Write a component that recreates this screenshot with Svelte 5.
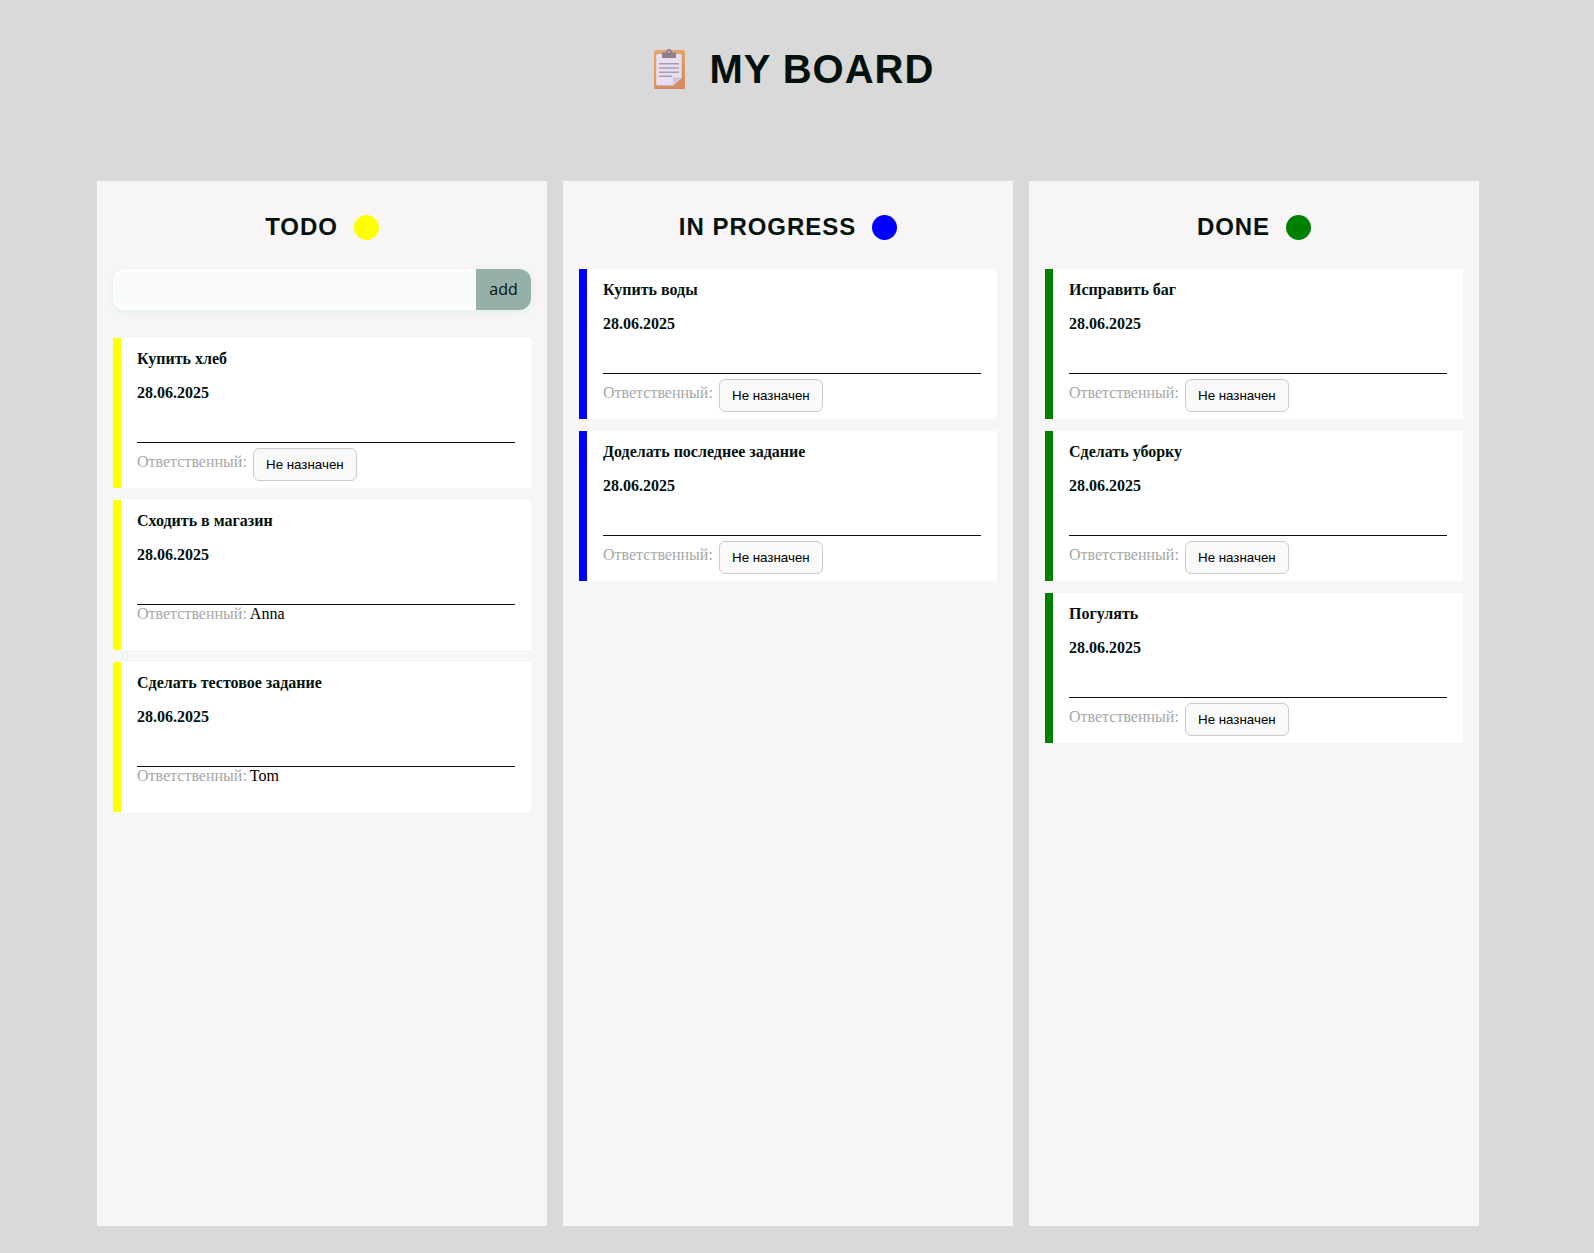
<script>
  const date = '28.06.2025';
  const columns = [
    {
      title: 'TODO',
      kind: 'todo',
      form: true,
      tasks: [
        { name: 'Купить хлеб' },
        { name: 'Сходить в магазин', person: 'Anna' },
        { name: 'Сделать тестовое задание', person: 'Tom' }
      ]
    },
    {
      title: 'IN PROGRESS',
      kind: 'progress',
      tasks: [{ name: 'Купить воды' }, { name: 'Доделать последнее задание' }]
    },
    {
      title: 'DONE',
      kind: 'done',
      tasks: [{ name: 'Исправить баг' }, { name: 'Сделать уборку' }, { name: 'Погулять' }]
    }
  ];
</script>

<div class="page">
  <header>
    <svg class="logo" viewBox="0 0 31 40.500" width="31" height="40" preserveAspectRatio="none" aria-hidden="true">
      <defs>
        <linearGradient id="wood" x1="0" y1="0" x2="0.4" y2="1">
          <stop offset="0" stop-color="#e6a878" />
          <stop offset="0.6" stop-color="#e09a60" />
          <stop offset="1" stop-color="#d78d5c" />
        </linearGradient>
        <linearGradient id="fold" x1="0" y1="0" x2="0.6" y2="0.6">
          <stop offset="0" stop-color="#c2b6cd" />
          <stop offset="1" stop-color="#dcd0e6" />
        </linearGradient>
      </defs>
      <rect x="0" y="1" width="31" height="39.5" rx="1.7" fill="url(#wood)" />
      <path d="M0.600 39.900h29.800" stroke="#cf806b" stroke-width="1" />
      <path d="M4 5h22q1.6 0 1.6 1.6V29l-8.4 8H4q-1.8 0-1.8-1.6V6.6Q2.200 5 4 5z" fill="#e9dff3" />
      <path d="M3 36.800h16.500" stroke="#c9b4cb" stroke-width="0.8" />
      <path d="M19.200 29h8.400l-8.400 8z" fill="url(#fold)" />
      <path
        d="M8 9V5q0-1.500 1.500-1.500H12Q12.500 0 15 0t3 3.500h2.500Q22 3.500 22 5v4z"
        fill="#8c8189"
      />
      <circle cx="15" cy="2.800" r="1.100" fill="#d5b79f" />
      <path d="M5 15h20M5 19.300h20M5 23.500h20M5 27.700h13" stroke="#a69db0" stroke-width="1.500" />
    </svg>
    <h1>MY BOARD</h1>
  </header>

  <main>
    {#each columns as column}
      <section class={column.kind}>
        <h2>{column.title}<span class="dot"></span></h2>
        {#if column.form}
          <form onsubmit={(e) => e.preventDefault()}>
            <input type="text" aria-label="task" />
            <button class="add">add</button>
          </form>
        {/if}
        <div class="tasks">
          {#each column.tasks as task}
            <article>
              <h3>{task.name}</h3>
              <time>{date}</time>
              <footer class:free={!task.person}>
                <span class="label">Ответственный:</span>
                {#if task.person}
                  <span class="person">{task.person}</span>
                {:else}
                  <button class="assign">Не назначен</button>
                {/if}
              </footer>
            </article>
          {/each}
        </div>
      </section>
    {/each}
  </main>
</div>

<style>
  :global(body) {
    margin: 0;
    background: #d9d9d9;
  }
  .page {
    box-sizing: border-box;
    width: 1576px;
    height: 1253px;
    color: #04110d;
    font-family: 'Liberation Serif', 'Times New Roman', serif;
    font-size: 16px;
  }
  header {
    display: flex;
    box-sizing: border-box;
    height: 181px;
    padding: 46px 0 0 654px;
  }
  .logo {
    margin: 3px 24.5px 0 0;
  }
  h1 {
    margin: 0;
    font: bold 40px/46px 'Liberation Sans', Arial, sans-serif;
    letter-spacing: 0.96px;
  }
  main {
    display: flex;
    justify-content: center;
    gap: 16px;
  }
  section {
    box-sizing: border-box;
    width: 450px;
    height: 1045px;
    padding: 32px 16px 0;
    background: #f7f5f6;
  }
  .todo {
    --accent: #ffff00;
  }
  .progress {
    --accent: #0000ff;
  }
  .done {
    --accent: #008000;
  }
  h2 {
    display: flex;
    justify-content: center;
    align-items: center;
    gap: 16px;
    height: 28px;
    margin: 0 0 28px;
    font: bold 24px/28px 'Liberation Sans', Arial, sans-serif;
    letter-spacing: 0.96px;
  }
  .dot {
    width: 25px;
    height: 25px;
    margin-top: 1px;
    border-radius: 50%;
    background: var(--accent);
  }
  form {
    display: flex;
    height: 41px;
    margin-bottom: 28px;
    border-radius: 12px;
    box-shadow: 0 2px 6px rgba(190, 232, 218, 0.4);
  }
  input {
    flex: 1;
    min-width: 0;
    box-sizing: border-box;
    border: solid #fff;
    border-width: 3px 0 3px 1px;
    border-radius: 12px 0 0 12px;
    background: #f9fbfa;
    outline: none;
  }
  .add {
    width: 55px;
    padding: 0 0 2px;
    border: 0;
    border-radius: 0 12px 12px 0;
    background: #96b0a8;
    color: #04110d;
    font: 16px 'Open Sans', sans-serif;
  }
  .tasks {
    display: flex;
    flex-direction: column;
    gap: 12px;
  }
  article {
    box-sizing: border-box;
    height: 150px;
    padding: 12px 16px 0;
    border-left: 8px solid var(--accent);
    background: #fff;
  }
  h3,
  time {
    display: block;
    height: 18px;
    margin: 0 0 16px;
    font-size: 16px;
    font-weight: bold;
    line-height: 18px;
  }
  footer {
    display: flex;
    gap: 3px;
    margin-top: 40px;
    border-top: 1px solid #04110d;
    line-height: 18px;
  }
  time {
    margin: 0;
  }
  .label {
    color: #a5a8a7;
  }
  .person {
    color: #000;
  }
  .free {
    gap: 6px;
  }
  .free .label {
    margin-top: 10px;
  }
  .assign {
    box-sizing: border-box;
    width: 104px;
    height: 33px;
    margin-top: 5px;
    padding: 0;
    border: 1px solid #ccc;
    border-radius: 6px;
    background: #f9f9f9;
    color: #000;
    font: 13.333px 'Liberation Sans', Arial, sans-serif;
  }
</style>
